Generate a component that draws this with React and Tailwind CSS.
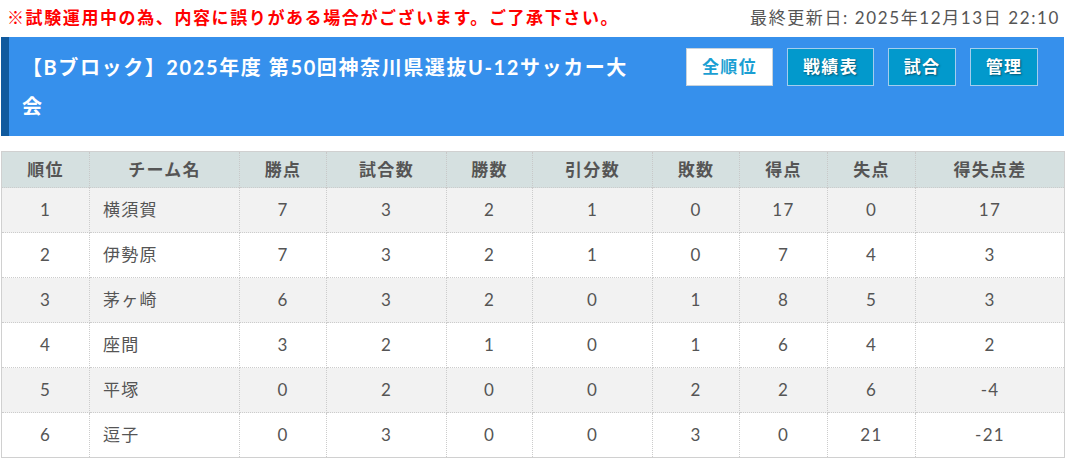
import React from 'react';

const font = { fontFamily: 'Lato, "Noto Sans CJK JP", sans-serif' };

const columns = [
  { label: '順位', w: 'w-[88px]' },
  { label: 'チーム名', w: 'w-[150px]' },
  { label: '勝点', w: 'w-[87px]' },
  { label: '試合数', w: 'w-[120px]' },
  { label: '勝数', w: 'w-[86px]' },
  { label: '引分数', w: 'w-[120px]' },
  { label: '敗数', w: 'w-[87px]' },
  { label: '得点', w: 'w-[88px]' },
  { label: '失点', w: 'w-[88px]' },
  { label: '得失点差', w: 'w-[149px]' },
];

const rows = [
  [1, '横須賀', 7, 3, 2, 1, 0, 17, 0, 17],
  [2, '伊勢原', 7, 3, 2, 1, 0, 7, 4, 3],
  [3, '茅ヶ崎', 6, 3, 2, 0, 1, 8, 5, 3],
  [4, '座間', 3, 2, 1, 0, 1, 6, 4, 2],
  [5, '平塚', 0, 2, 0, 0, 2, 2, 6, -4],
  [6, '逗子', 0, 3, 0, 0, 3, 0, 21, -21],
];

const buttons = [
  { label: '全順位', active: true, w: 'w-[87px]' },
  { label: '戦績表', w: 'w-[87px]' },
  { label: '試合', w: 'w-[68px]' },
  { label: '管理', w: 'w-[68px]' },
];

export default function App() {
  return (
    <div className="w-[1067px] h-[462px] bg-white overflow-hidden tracking-[0.1em]" style={font}>
      {/* notice line */}
      <div className="flex items-center justify-between h-[37px] pl-[7px] pr-[7px] pb-[2px]">
        <p className="text-[17px] font-bold text-[#ff0000]">
          ※試験運用中の為、内容に誤りがある場合がございます。ご了承下さい。
        </p>
        <p className="text-[17px] text-[#555]">最終更新日: 2025年12月13日 22:10</p>
      </div>

      {/* title bar */}
      <div className="ml-[1px] w-[1063px] h-[99px] bg-[#3690ec] border-l-[8px] border-[#105a9e] flex justify-between pl-[13px] pr-[26px]">
        <h1 className="w-[618px] pt-[11px] text-[20px] leading-[39px] font-bold text-white">
          【Bブロック】2025年度 第50回神奈川県選抜U-12サッカー大会
        </h1>
        <div className="flex gap-[14px] pt-[11px] tracking-[0.08em]">
          {buttons.map((b) => (
            <div
              key={b.label}
              className={`${b.w} h-[38px] flex items-center justify-center text-[17px] font-bold border ${
                b.active
                  ? 'bg-white border-[#c8d3dc] text-[#1b9fd3]'
                  : 'bg-[#0299cc] border-[#a3cdee] text-white [text-shadow:1px_1px_2px_rgba(0,0,0,0.45)]'
              }`}
            >
              {b.label}
            </div>
          ))}
        </div>
      </div>

      {/* standings */}
      <div className="ml-[1px] mt-[15px] w-[1063px] tracking-[0.08em]">
        <table className="table-fixed w-full border-collapse border border-[#d0d0d0] text-[17px] text-[#555]">
          <thead>
            <tr className="h-[36px] bg-[#d5e0e0]">
              {columns.map((c) => (
                <th
                  key={c.label}
                  className={`${c.w} font-bold text-[#555] text-center border-x border-dotted border-[#c8c8c8]`}
                >
                  {c.label}
                </th>
              ))}
            </tr>
          </thead>
          <tbody>
            {rows.map((r, i) => (
              <tr key={r[0]} className={`h-[45px] ${i % 2 === 0 ? 'bg-[#f2f2f2]' : 'bg-white'}`}>
                {r.map((v, j) => (
                  <td
                    key={j}
                    className={`border border-dotted border-[#cccccc] ${
                      j === 1 ? 'text-left pl-[13px]' : 'text-center'
                    }`}
                  >
                    {v}
                  </td>
                ))}
              </tr>
            ))}
          </tbody>
        </table>
      </div>
    </div>
  );
}
